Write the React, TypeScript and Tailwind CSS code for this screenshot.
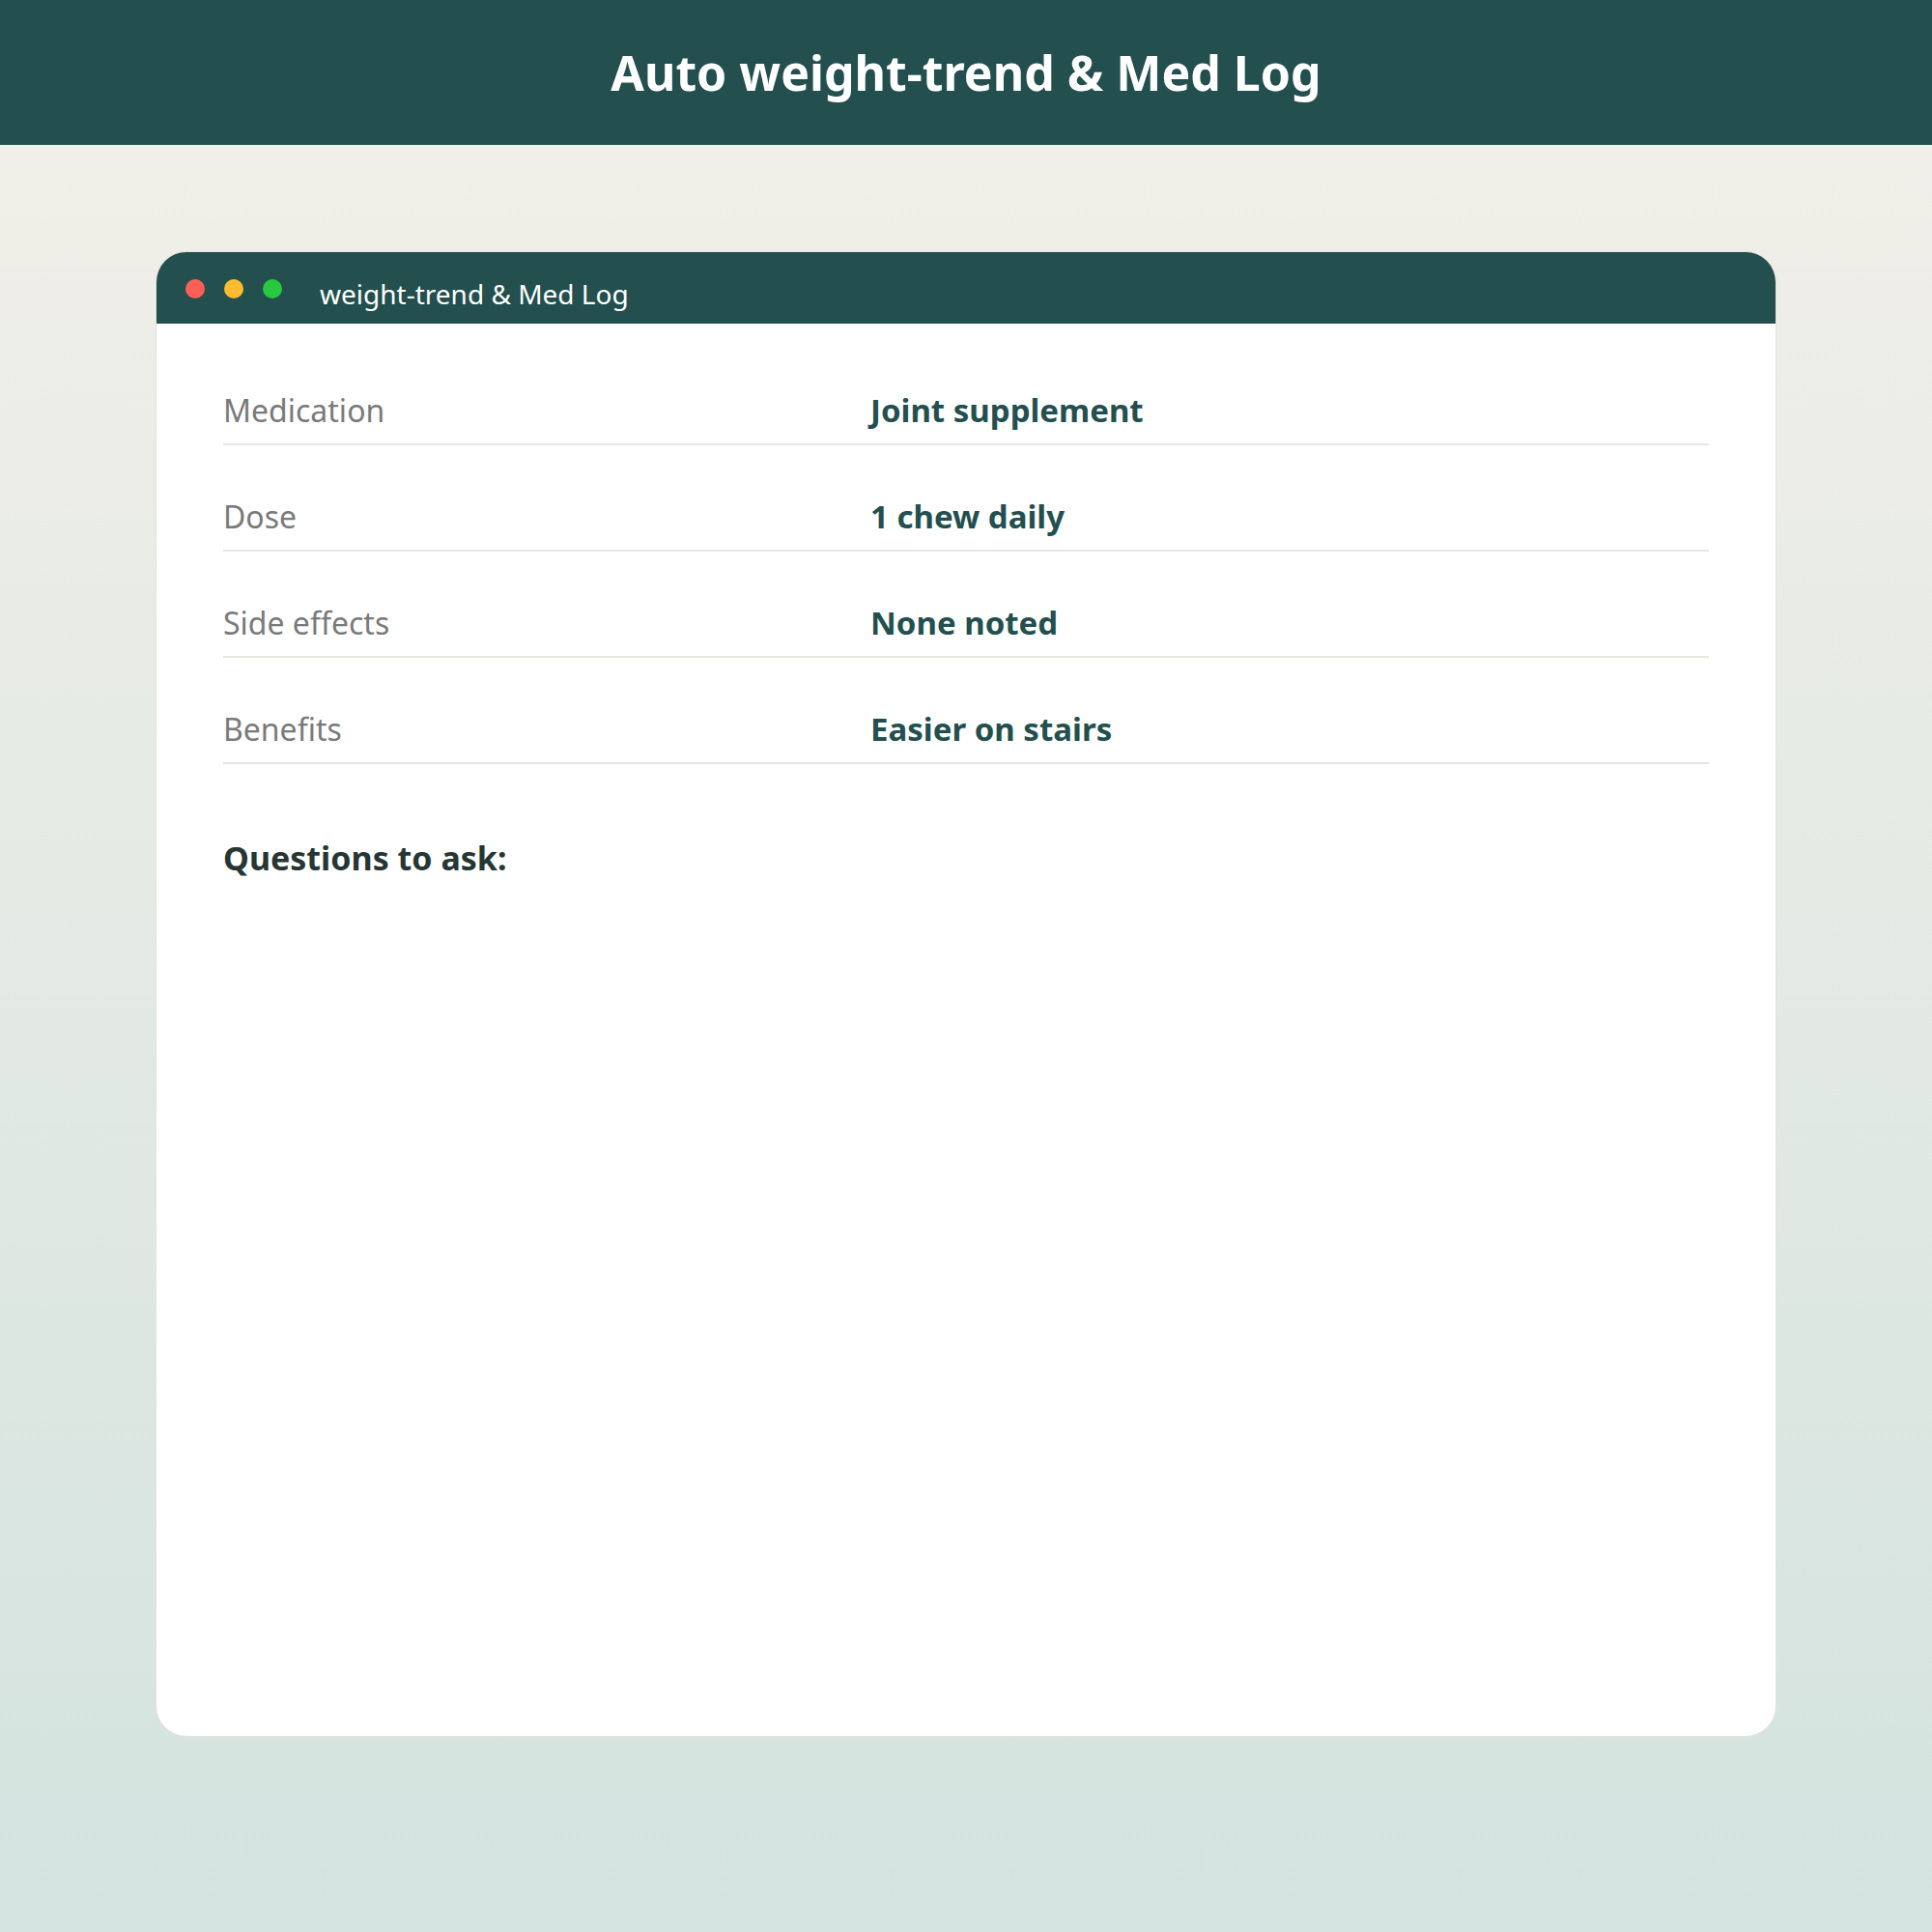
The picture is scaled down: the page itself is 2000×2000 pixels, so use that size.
export default function App() {
  const rows = [
    ["Medication", "Joint supplement"],
    ["Dose", "1 chew daily"],
    ["Side effects", "None noted"],
    ["Benefits", "Easier on stairs"],
  ];
  return (
    <div
      className="w-[2000px] h-[2000px] flex flex-col bg-gradient-to-b from-[#f3f0e9] to-[#d3e3df]"
      style={{ fontFamily: '"Noto Sans", "Open Sans", sans-serif' }}
    >
      <div className="h-[150px] bg-[#234f4e] flex items-center justify-center">
        <h1 className="text-white text-[50px] font-bold leading-none">Auto weight-trend &amp; Med Log</h1>
      </div>
      <div className="px-[161px] pt-[110px]">
        <div className="h-[1538px] bg-white rounded-[32px] overflow-hidden border border-[#e2e2dc] flex flex-col">
          <div className="h-[74px] bg-[#234f4e] flex items-center pl-[30px] pt-[2px]">
            <span className="w-[20px] h-[20px] rounded-full bg-[#ff5f57]" />
            <span className="w-[20px] h-[20px] rounded-full bg-[#febc2e] ml-[20px]" />
            <span className="w-[20px] h-[20px] rounded-full bg-[#28c840] ml-[20px]" />
            <span className="text-white text-[28px] ml-[39px] mt-[10px]">weight-trend &amp; Med Log</span>
          </div>
          <div className="px-[69px] pt-[16px]">
            {rows.map(([k, v]) => (
              <div key={k} className="h-[110px] flex items-center pt-[50px] pb-[10px] border-b-2 border-[#e6e6e3]">
                <div className="w-[670px] text-[32px] text-[#7a7a7a] leading-[50px]">{k}</div>
                <div className="text-[33px] font-bold text-[#234f4e] leading-[50px]">{v}</div>
              </div>
            ))}
            <div className="mt-[72px] text-[34px] font-bold text-[#263634] leading-[50px]">Questions to ask:</div>
          </div>
        </div>
      </div>
    </div>
  );
}
